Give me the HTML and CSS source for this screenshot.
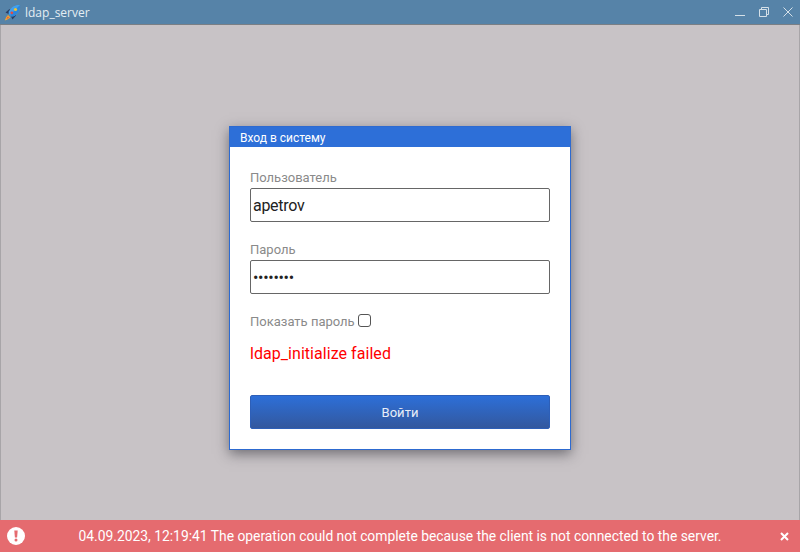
FILE: index.html
```html
<!DOCTYPE html>
<html>
  <head>
    <title>ldap_server</title>
    <meta charset="UTF-8" />
    <link rel="stylesheet" href="styles.css">
  </head>

  <body>
    <div class="window">
      <div class="titlebar">
        <svg class="app-icon" width="17" height="17" viewBox="0 0 17 17">
          <path d="M1.500 8.500L5.500 5 8 8 4.500 10Z" fill="#2b3e63"/>
          <path d="M8.500 15.500L12 11.500 9 9 7 12.500Z" fill="#2b3e63"/>
          <path d="M16 1C11.500 0.500 7.500 2.500 4.800 7.500L4.500 9.500 7.500 12.500 9.500 12.200C14.500 9.500 16.500 5.500 16 1Z" fill="#3fa0ee"/>
          <path d="M16 1C16.500 5.500 14.500 9.500 9.500 12.200L7.500 12.500 6 11Z" fill="#2f86d8"/>
          <circle cx="7.800" cy="8.800" r="1.400" fill="#e8483f"/>
          <circle cx="11.500" cy="5.500" r="1.600" fill="#f2c230"/>
          <path d="M4 11L6.500 13.500 3.500 15.500 0.800 16.500 2 13.500Z" fill="#f2a830"/>
          <path d="M3.800 12.500L5 13.700 2.500 15Z" fill="#e8483f"/>
        </svg>
        <span class="app-name">ldap_server</span>
        <div class="win-buttons">
          <svg width="10" height="10" viewBox="0 0 10 10"><path d="M0 8.500H10" stroke="#d5e0e8" fill="none"/></svg>
          <svg width="10" height="10" viewBox="0 0 10 10"><path d="M0.500 2.500H7.500V9.500H0.500ZM2.500 2.500V0.500H9.500V7.500H7.500" stroke="#d5e0e8" fill="none"/></svg>
          <svg width="10" height="10" viewBox="0 0 10 10"><path d="M0.500 0.500L9.500 9.500M9.500 0.500L0.500 9.500" stroke="#d5e0e8" fill="none"/></svg>
        </div>
      </div>

      <div class="main">
        <div class="dialog">
          <div class="dialog-title">Вход в систему</div>
          <div class="dialog-body">
            <label class="field-label">Пользователь</label>
            <input class="field" type="text" value="apetrov">
            <label class="field-label">Пароль</label>
            <input class="field" type="password" value="12345678">
            <div class="show-pass">
              <span>Показать пароль</span>
              <input class="check" type="checkbox">
            </div>
            <div class="error">ldap_initialize failed</div>
            <button class="login">Войти</button>
          </div>
        </div>
      </div>

      <div class="toast">
        <svg class="toast-icon" width="18" height="18" viewBox="0 0 18 18">
          <circle cx="9" cy="9" r="9" fill="#fff"/>
          <path d="M7.300 3.500H10.700L10.100 10.500H7.900Z" fill="#e56b6f"/>
          <circle cx="9" cy="13" r="1.500" fill="#e56b6f"/>
        </svg>
        <span class="toast-text">04.09.2023, 12:19:41 The operation could not complete because the client is not connected to the server.</span>
        <svg class="toast-close" width="9" height="9" viewBox="0 0 9 9"><path d="M1 1L8 8M8 1L1 8" stroke="#fff" stroke-width="2" fill="none"/></svg>
      </div>
    </div>
  </body>
</html>
```
FILE: styles.css
```css
*{
    margin: 0;
    padding: 0;
    box-sizing: border-box;
    font-family: Roboto, sans-serif;
}
html, body{
    height: 100%;
}
.window{
    display: flex;
    flex-direction: column;
    height: 552px;
    background: #c8c3c6;
}
.titlebar{
    display: flex;
    align-items: center;
    height: 25px;
    padding: 0 0 0 4px;
    background: #5683a8;
    border-bottom: 1px solid #7a7f85;
}
.app-icon{
    margin-right: 4px;
}
.app-name{
    color: #e4edf3;
    font-size: 12px;
    font-family: "Open Sans", sans-serif;
}
.win-buttons{
    display: flex;
    gap: 14px;
    margin-left: auto;
    padding-right: 7px;
}
.main{
    flex: 1;
    padding-top: 101px;
    border-left: 1px solid #a8a5a8;
    border-right: 1px solid #a8a5a8;
}
.dialog{
    width: 342px;
    height: 324px;
    margin-left: 228px;
    background: #fff;
    border: 1px solid #2d6ad0;
    box-shadow: 0 4px 12px rgba(40, 40, 50, 0.55);
}
.dialog-title{
    height: 20px;
    padding-left: 10px;
    background: #2d6fd8;
    color: #fff;
    font-size: 12px;
    line-height: 22px;
}
.dialog-body{
    display: flex;
    flex-direction: column;
    padding: 21px 20px;
}
.field-label{
    height: 20px;
    color: #8a8a8a;
    font-size: 13px;
    line-height: 20px;
}
.field{
    width: 300px;
    height: 34px;
    margin-bottom: 18px;
    padding: 0 2px;
    border: 1px solid #666;
    border-radius: 2px;
    color: #222;
    font-size: 16px;
    letter-spacing: -0.3px;
    outline: none;
}
.show-pass{
    display: flex;
    align-items: center;
    gap: 3px;
    height: 18px;
    color: #8a8a8a;
    font-size: 13px;
}
.check{
    width: 13px;
    height: 13px;
    margin-bottom: 2px;
    appearance: none;
    border: 1px solid #555;
    border-radius: 3px;
    background: #fff;
}
.error{
    margin-top: 14px;
    color: #f00;
    font-size: 16px;
    letter-spacing: 0.05px;
    line-height: 19px;
}
.login{
    width: 300px;
    height: 34px;
    margin-top: 32px;
    border: 1px solid #2d5fb8;
    border-radius: 2px;
    background: linear-gradient(#2d6fd8, #33589e);
    color: #e8eef8;
    font-size: 13px;
}
.toast{
    display: flex;
    align-items: center;
    height: 32px;
    padding: 0 11px 0 7px;
    background: #e56b6f;
    color: #fff;
}
.toast-text{
    flex: 1;
    text-align: center;
    font-size: 13.85px;
    padding-right: 5px;
}
```
